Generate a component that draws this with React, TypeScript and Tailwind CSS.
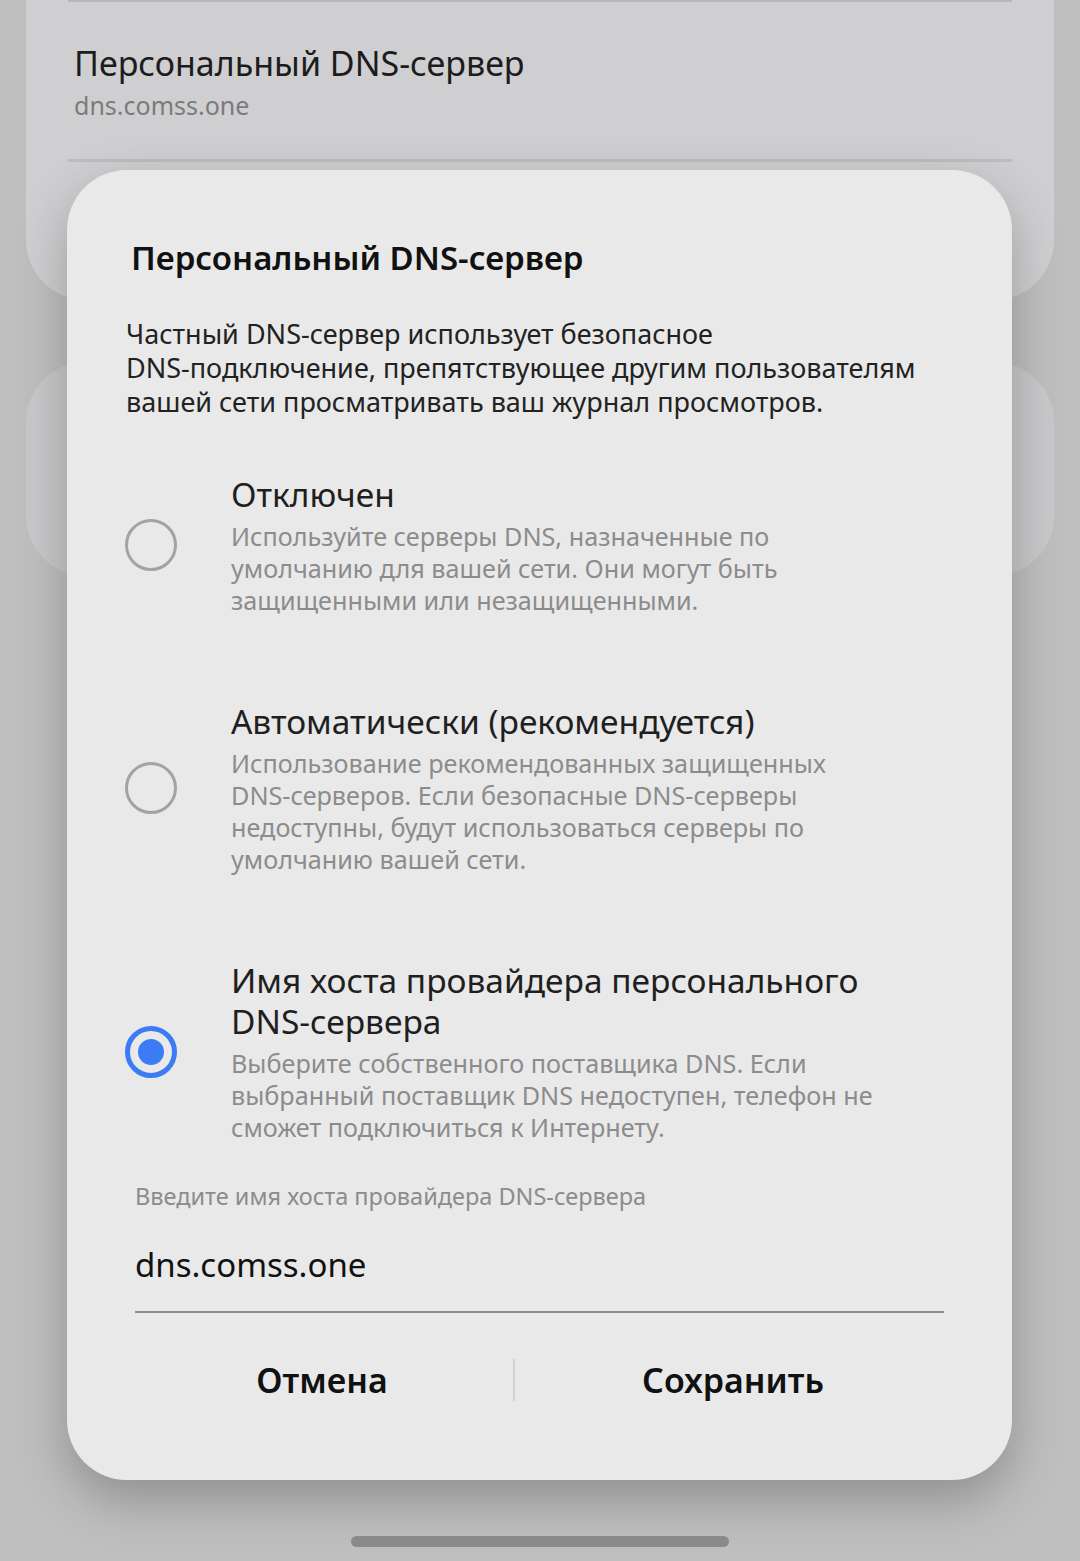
const font = { fontFamily: '"Noto Sans", "Open Sans", sans-serif' }

function Radio({ checked }: { checked?: boolean }) {
  if (checked) {
    return (
      <div className="flex h-[52px] w-[52px] shrink-0 items-center justify-center rounded-full border-[5px] border-[#3b7cf5]">
        <div className="h-[26px] w-[26px] rounded-full bg-[#3b7cf5]" />
      </div>
    )
  }
  return <div className="h-[52px] w-[52px] shrink-0 rounded-full border-[3px] border-[#a3a3a3]" />
}

function Option({
  title,
  desc,
  checked,
}: {
  title: string
  desc: string[]
  checked?: boolean
}) {
  return (
    <div className="flex items-center">
      <div className="flex w-[164px] shrink-0 justify-start pl-[58px]">
        <Radio checked={checked} />
      </div>
      <div className="flex flex-col">
        <div className="text-[33.5px] leading-[41px] text-[#1f1f1f] whitespace-pre">{title}</div>
        <div className="mt-[5px] text-[25.2px] leading-[32px] text-[#8c8c8c] whitespace-nowrap">
          {desc.map((d) => (
            <div key={d}>{d}</div>
          ))}
        </div>
      </div>
    </div>
  )
}

export default function App() {
  return (
    <div className="relative h-[1561px] w-[1080px] overflow-hidden bg-[#bfbfbf]" style={font}>
      {/* page behind the dialog */}
      <div className="mx-[26px] h-[300px] rounded-b-[60px] bg-[#cfcfd1] px-[42px]">
        <div className="h-[2px] bg-[#b9b9bb]" />
        <div className="pl-[6px] pt-[39px] pb-[37px]">
          <div className="text-[34px] leading-[44px] text-[#1c1c1c]">Персональный DNS-сервер</div>
          <div className="mt-[3px] text-[25px] leading-[34px] text-[#7b7b7b]">dns.comss.one</div>
        </div>
        <div className="h-[3px] bg-[#bdbdbf]" />
      </div>
      <div className="mx-[26px] mt-[62px] h-[214px] rounded-[60px] bg-[#c9c9cb]" />

      {/* dialog */}
      <div className="absolute left-[67px] top-[170px] flex h-[1310px] w-[945px] flex-col rounded-[60px] bg-[#e9e9e9] shadow-[0_20px_50px_rgba(0,0,0,0.25)]">
        <div className="pl-[64px] pt-[66px] text-[33px] font-semibold leading-[44px] text-[#111]">
          Персональный DNS-сервер
        </div>
        <div className="mt-[37px] pl-[59px] text-[27px] leading-[34px] text-[#222] whitespace-nowrap">
          <div>Частный DNS-сервер использует безопасное</div>
          <div>DNS-подключение, препятствующее другим пользователям</div>
          <div>вашей сети просматривать ваш журнал просмотров.</div>
        </div>

        <div className="mt-[55px] flex flex-col gap-[85px]">
          <Option
            title="Отключен"
            desc={[
              'Используйте серверы DNS, назначенные по',
              'умолчанию для вашей сети. Они могут быть',
              'защищенными или незащищенными.',
            ]}
          />
          <Option
            title="Автоматически (рекомендуется)"
            desc={[
              'Использование рекомендованных защищенных',
              'DNS-серверов. Если безопасные DNS-серверы',
              'недоступны, будут использоваться серверы по',
              'умолчанию вашей сети.',
            ]}
          />
          <Option
            checked
            title={'Имя хоста провайдера персонального\nDNS-сервера'}
            desc={[
              'Выберите собственного поставщика DNS. Если',
              'выбранный поставщик DNS недоступен, телефон не',
              'сможет подключиться к Интернету.',
            ]}
          />
        </div>

        <div className="mx-[68px] mt-[38px]">
          <div className="text-[23.5px] leading-[30px] text-[#8c8c8c]">
            Введите имя хоста провайдера DNS-сервера
          </div>
          <div className="mt-[32px] text-[33px] leading-[44px] text-[#111]">dns.comss.one</div>
          <div className="mt-[24px] h-[2px] bg-[#8f8f8f]" />
        </div>

        <div className="mt-[45px] flex items-center pl-[64px]">
          <div className="w-[382px] text-center text-[34px] font-semibold leading-[44px] text-[#111]">
            Отмена
          </div>
          <div className="h-[42px] w-[2px] bg-[#d2d2d2]" />
          <div className="w-[436px] text-center text-[34px] font-semibold leading-[44px] text-[#111]">
            Сохранить
          </div>
        </div>
      </div>

      {/* gesture bar */}
      <div className="absolute bottom-[14px] left-[351px] h-[11px] w-[378px] rounded-full bg-[#8a8a8a]" />
    </div>
  )
}
